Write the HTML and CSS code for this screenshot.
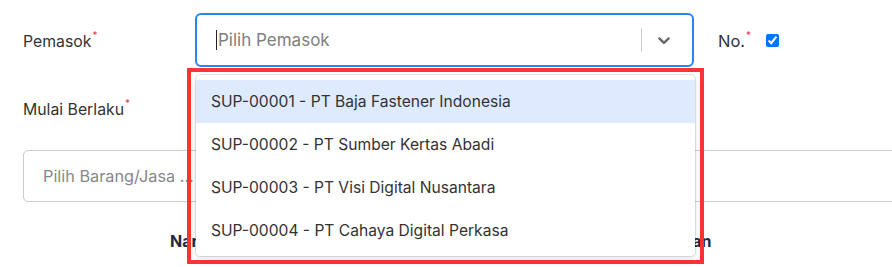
FILE: index.html
```html
<!DOCTYPE html>
<html lang="id">
<head>
    <meta charset="UTF-8">
    <meta name="viewport" content="width=device-width, initial-scale=1.0">
    <title>Daftar Harga Pemasok</title>
    <link rel="stylesheet" href="styles.css">
</head>
<body>
    <div class="page">
        <div class="form-row">
            <label class="form-label">Pemasok<span class="req">*</span></label>
            <div class="select-wrap">
                <div class="select-control">
                    <div class="select-value">
                        <span class="caret"></span>
                        <span class="placeholder">Pilih Pemasok</span>
                    </div>
                    <span class="select-sep"></span>
                    <div class="select-indicator">
                        <svg width="20" height="20" viewBox="0 0 20 20" aria-hidden="true">
                            <path fill="currentColor" d="M4.516 7.548c0.436-0.446 1.043-0.481 1.576 0l3.908 3.747 3.908-3.747c0.533-0.481 1.141-0.446 1.574 0 0.436 0.445 0.408 1.197 0 1.615-0.406 0.418-4.695 4.502-4.695 4.502-0.217 0.223-0.502 0.335-0.787 0.335s-0.57-0.112-0.789-0.335c0 0-4.287-4.084-4.695-4.502s-0.436-1.170 0-1.615z"></path>
                        </svg>
                    </div>
                </div>
                <div class="annot">
                    <div class="select-menu">
                        <div class="option active">SUP-00001 - PT Baja Fastener Indonesia</div>
                        <div class="option">SUP-00002 - PT Sumber Kertas Abadi</div>
                        <div class="option">SUP-00003 - PT Visi Digital Nusantara</div>
                        <div class="option">SUP-00004 - PT Cahaya Digital Perkasa</div>
                    </div>
                </div>
            </div>
            <label class="inline-label">No.<span class="req">*</span></label>
            <input type="checkbox" class="check" checked>
        </div>
        <div class="form-row second">
            <label class="form-label">Mulai Berlaku<span class="req">*</span></label>
        </div>
        <input type="text" class="item-search" placeholder="Pilih Barang/Jasa ...">
        <div class="table-head">
            <div class="th th-name">Nama Barang</div>
            <div class="th th-unit">Satuan</div>
        </div>
    </div>
</body>
</html>
```

FILE: styles.css
```css
html, body {
    margin: 0;
    padding: 0;
    background-color: #fff;
    overflow: hidden;
}
body {
    font-family: Inter, "Noto Sans", Arial, sans-serif;
    color: #333;
}
.page {
    height: 267px;
    padding: 13px 0 0 23px;
    box-sizing: border-box;
    overflow: hidden;
}
.form-row {
    display: flex;
    align-items: center;
}
.form-label {
    width: 172px;
    flex-shrink: 0;
    font-size: 15.8px;
}
.req {
    color: #e8365d;
    font-size: 10px;
    vertical-align: 8px;
    margin-left: 1px;
}
.select-wrap {
    position: relative;
    width: 499px;
    flex-shrink: 0;
}
.select-control {
    display: flex;
    align-items: center;
    height: 54px;
    box-sizing: border-box;
    border: 2px solid #2684ff;
    border-radius: 6px;
    background-color: #fff;
}
.select-value {
    flex: 1;
    display: flex;
    align-items: center;
    padding-left: 19px;
}
.caret {
    width: 1px;
    height: 20px;
    background-color: #222;
    margin-right: 1px;
}
.placeholder {
    font-size: 17px;
    color: #808080;
}
.select-sep {
    width: 1px;
    height: 24px;
    background-color: #ccc;
}
.select-indicator {
    display: flex;
    align-items: center;
    color: #666;
    padding: 0 18px 0 12px;
}
.annot {
    position: absolute;
    left: -8px;
    top: 55px;
    width: 517px;
    height: 196px;
    box-sizing: border-box;
    border: 4px solid #ff3333;
    padding: 3px 5px 4px 5px;
    z-index: 10;
}
.select-menu {
    background-color: #fff;
    border-radius: 4px;
    box-shadow: 0 0 0 1px rgba(0,0,0,0.1), 0 4px 11px rgba(0,0,0,0.1);
    padding: 5px 0 4px;
    height: 100%;
    box-sizing: border-box;
}
.option {
    height: 43px;
    line-height: 43px;
    padding: 0 15px;
    font-size: 15.6px;
    color: #333;
}
.option.active {
    background-color: #deebff;
}
.inline-label {
    margin-left: 24px;
    font-size: 16.5px;
}
.check {
    width: 13px;
    height: 13px;
    margin: 0 0 0 15px;
    accent-color: #0075ff;
}
.second {
    height: 38px;
    margin-top: 22px;
}
.item-search {
    display: block;
    width: 1000px;
    height: 52px;
    box-sizing: border-box;
    margin-top: 23px;
    border: 1px solid #ccc;
    border-radius: 5px;
    padding: 0 19px;
    font-family: inherit;
    font-size: 16.3px;
    color: #333;
}
.item-search::placeholder {
    color: #888;
}
.table-head {
    display: flex;
    margin-top: 29px;
    font-weight: 700;
    font-size: 16px;
    color: #1e2a44;
}
.th-name {
    margin-left: 147px;
}
.th-unit {
    margin-left: 382px;
}
```
